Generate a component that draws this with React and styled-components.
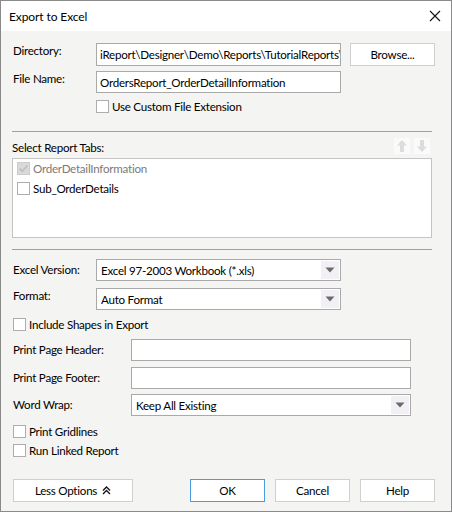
import React from "react";
import styled, { createGlobalStyle } from "styled-components";

const Global = createGlobalStyle`
  html, body { margin: 0; padding: 0; background: #ffffff; }
  * { box-sizing: border-box; }
  body { font-family: Lato, "Noto Sans", sans-serif; font-size: 11.6px; letter-spacing: -0.25px; color: #000; }
`;

const Dialog = styled.div`
  width: 452px;
  height: 512px;
  border: 1px solid #8a8a8a;
  background: #f4f4f2;
  display: flex;
  flex-direction: column;
  overflow: hidden;
`;

const TitleBar = styled.div`
  height: 30px;
  background: #ffffff;
  display: flex;
  align-items: center;
  justify-content: space-between;
  padding: 0 8px 0 8px;
  flex-shrink: 0;
`;

const Title = styled.div`
  color: #000;
  font-size: 12px;
  letter-spacing: -0.1px;
  padding-top: 1px;
`;

const CloseBtn = styled.div`
  width: 14px;
  height: 14px;
  display: flex;
  align-items: center;
  justify-content: center;
  margin-right: 1px;
`;

const Content = styled.div`
  display: flex;
  flex-direction: column;
  padding: 0 19px 0 10px;
`;

const Row = styled.div`
  display: flex;
  align-items: ${(p) => p.$align || "center"};
  margin-top: ${(p) => p.$mt || 0}px;
  height: ${(p) => p.$h || 22}px;
`;

const Label = styled.div`
  width: ${(p) => p.$w}px;
  padding-left: ${(p) => p.$pl ?? 2}px;
  flex-shrink: 0;
  align-self: ${(p) => p.$self || "auto"};
  line-height: 16px;
  white-space: nowrap;
`;

const TextBox = styled.div`
  width: ${(p) => p.$w}px;
  flex-shrink: 0;
  height: 100%;
  background: #fff;
  border: 1px solid #a9a9a9;
  padding: 0 3px;
  display: flex;
  align-items: center;
  white-space: nowrap;
  overflow: hidden;
`;

const Button = styled.div`
  width: ${(p) => p.$w || 75}px;
  flex-shrink: 0;
  height: 23px;
  background: #fff;
  border: 1px solid ${(p) => (p.$primary ? "#4b9be0" : "#d0d0d0")};
  display: flex;
  align-items: center;
  justify-content: center;
  gap: 5px;
  margin-left: ${(p) => p.$ml || 0}px;
`;

const Select = styled.div`
  width: ${(p) => p.$w}px;
  flex-shrink: 0;
  height: 100%;
  background: #fff;
  border: 1px solid #a9a9a9;
  display: flex;
  align-items: center;
  padding: 1px 1px 1px 4px;
`;

const SelectText = styled.div`
  flex: 1;
  white-space: nowrap;
`;

const ArrowBox = styled.div`
  width: 18px;
  height: 100%;
  background: #f2f0f4;
  display: flex;
  align-items: center;
  justify-content: center;
`;

const Box = styled.div`
  width: 13px;
  height: 13px;
  flex-shrink: 0;
  background: ${(p) => (p.$disabled ? "#d9d9d9" : "#fff")};
  border: 1px solid ${(p) => (p.$disabled ? "#cccccc" : "#adadad")};
  display: flex;
  align-items: center;
  justify-content: center;
`;

const CheckRow = styled.div`
  display: flex;
  align-items: center;
  gap: 3px;
  height: 13px;
  margin-top: ${(p) => p.$mt || 0}px;
  padding-left: ${(p) => p.$pl || 0}px;
  color: ${(p) => (p.$disabled ? "#7a7a7a" : "#000")};
  white-space: nowrap;
  line-height: 13px;
`;

const Separator = styled.div`
  height: 1px;
  background: #a0a0a0;
  margin-top: ${(p) => p.$mt}px;
  width: 420px;
  margin-left: 1px;
`;

const TabsHeader = styled.div`
  display: flex;
  justify-content: space-between;
  align-items: flex-end;
  height: 16px;
  margin-top: 6px;
  padding-left: 1px;
  width: 420px;
`;

const MoveButtons = styled.div`
  display: flex;
  gap: 4px;
  padding-right: 1px;
`;

const MoveBtn = styled.div`
  width: 16px;
  height: 16px;
  background: #fafafa;
  display: flex;
  align-items: center;
  justify-content: center;
`;

const ListBox = styled.div`
  margin-top: 4px;
  margin-left: 1px;
  width: 420px;
  height: 80px;
  background: #fff;
  border: 1px solid #c4c4c4;
  padding: 3px 0 0 4px;
  display: flex;
  flex-direction: column;
  gap: 6px;
`;

const Footer = styled.div`
  display: flex;
  margin-top: 22px;
  padding-left: 2px;
  height: 23px;
`;

const Check = ({ checked, disabled }) => (
  <Box $disabled={disabled}>
    {checked && (
      <svg width="11" height="11" viewBox="0 0 11 11">
        <path d="M1.5 5.5 L4.2 8.2 L9.5 2.5" fill="none" stroke="#bdbdbd" strokeWidth="1.6" />
      </svg>
    )}
  </Box>
);

const Arrow = () => (
  <ArrowBox>
    <svg width="10" height="6" viewBox="0 0 10 6">
      <path d="M0.5 0.5 H9.5 L5 5.5 Z" fill="#6b6b6b" />
    </svg>
  </ArrowBox>
);

export default function App() {
  return (
    <>
      <Global />
      <Dialog>
        <TitleBar>
          <Title>Export to Excel</Title>
          <CloseBtn>
            <svg width="12" height="12" viewBox="0 0 12 12">
              <path d="M1 1 L11 11 M11 1 L1 11" stroke="#111" strokeWidth="1.1" />
            </svg>
          </CloseBtn>
        </TitleBar>
        <Content>
          <Row $mt={12} $h={23}>
            <Label $w={85} $pl={2} $self="flex-start">Directory:</Label>
            <TextBox $w={245}>iReport\Designer\Demo\Reports\TutorialReports\</TextBox>
            <Button $w={85} $ml={9}>Browse...</Button>
          </Row>
          <Row $mt={5} $h={22}>
            <Label $w={85} $pl={2} $self="flex-start">File Name:</Label>
            <TextBox $w={245}>OrdersReport_OrderDetailInformation</TextBox>
          </Row>
          <CheckRow $mt={7} $pl={85}>
            <Check />
            <span>Use Custom File Extension</span>
          </CheckRow>
          <Separator $mt={18} />
          <TabsHeader>
            <span>Select Report Tabs:</span>
            <MoveButtons>
              <MoveBtn>
                <svg width="12" height="14" viewBox="0 0 12 14">
                  <path d="M6 1 L11 6.5 H8 V13 H4 V6.5 H1 Z" fill="#dcdcdc" />
                </svg>
              </MoveBtn>
              <MoveBtn>
                <svg width="12" height="14" viewBox="0 0 12 14">
                  <path d="M6 13 L11 7.5 H8 V1 H4 V7.5 H1 Z" fill="#dcdcdc" />
                </svg>
              </MoveBtn>
            </MoveButtons>
          </TabsHeader>
          <ListBox>
            <CheckRow $disabled>
              <Check checked disabled />
              <span>OrderDetailInformation</span>
            </CheckRow>
            <CheckRow $mt={1}>
              <Check />
              <span>Sub_OrderDetails</span>
            </CheckRow>
          </ListBox>
          <Separator $mt={11} />
          <Row $mt={9} $h={22}>
            <Label $w={85} $pl={2}>Excel Version:</Label>
            <Select $w={245}>
              <SelectText>Excel 97-2003 Workbook (*.xls)</SelectText>
              <Arrow />
            </Select>
          </Row>
          <Row $mt={7} $h={22}>
            <Label $w={85} $pl={2} $self="flex-start">Format:</Label>
            <Select $w={245}>
              <SelectText>Auto Format</SelectText>
              <Arrow />
            </Select>
          </Row>
          <CheckRow $mt={8} $pl={2}>
            <Check />
            <span>Include Shapes in Export</span>
          </CheckRow>
          <Row $mt={8} $h={22}>
            <Label $w={120} $pl={2}>Print Page Header:</Label>
            <TextBox $w={280} />
          </Row>
          <Row $mt={6} $h={22}>
            <Label $w={120} $pl={2}>Print Page Footer:</Label>
            <TextBox $w={280} />
          </Row>
          <Row $mt={5} $h={22}>
            <Label $w={120} $pl={2}>Word Wrap:</Label>
            <Select $w={280}>
              <SelectText>Keep All Existing</SelectText>
              <Arrow />
            </Select>
          </Row>
          <CheckRow $mt={9} $pl={2}>
            <Check />
            <span>Print Gridlines</span>
          </CheckRow>
          <CheckRow $mt={6} $pl={2}>
            <Check />
            <span>Run Linked Report</span>
          </CheckRow>
          <Footer>
            <Button $w={120}>
              <span>Less Options</span>
              <svg width="9" height="9" viewBox="0 0 9 9">
                <path d="M1 4.5 L4.5 1 L8 4.5 M1 8 L4.5 4.5 L8 8" fill="none" stroke="#111" strokeWidth="1.3" />
              </svg>
            </Button>
            <Button $w={75} $ml={57} $primary>OK</Button>
            <Button $w={75} $ml={10}>Cancel</Button>
            <Button $w={75} $ml={10}>Help</Button>
          </Footer>
        </Content>
      </Dialog>
    </>
  );
}
